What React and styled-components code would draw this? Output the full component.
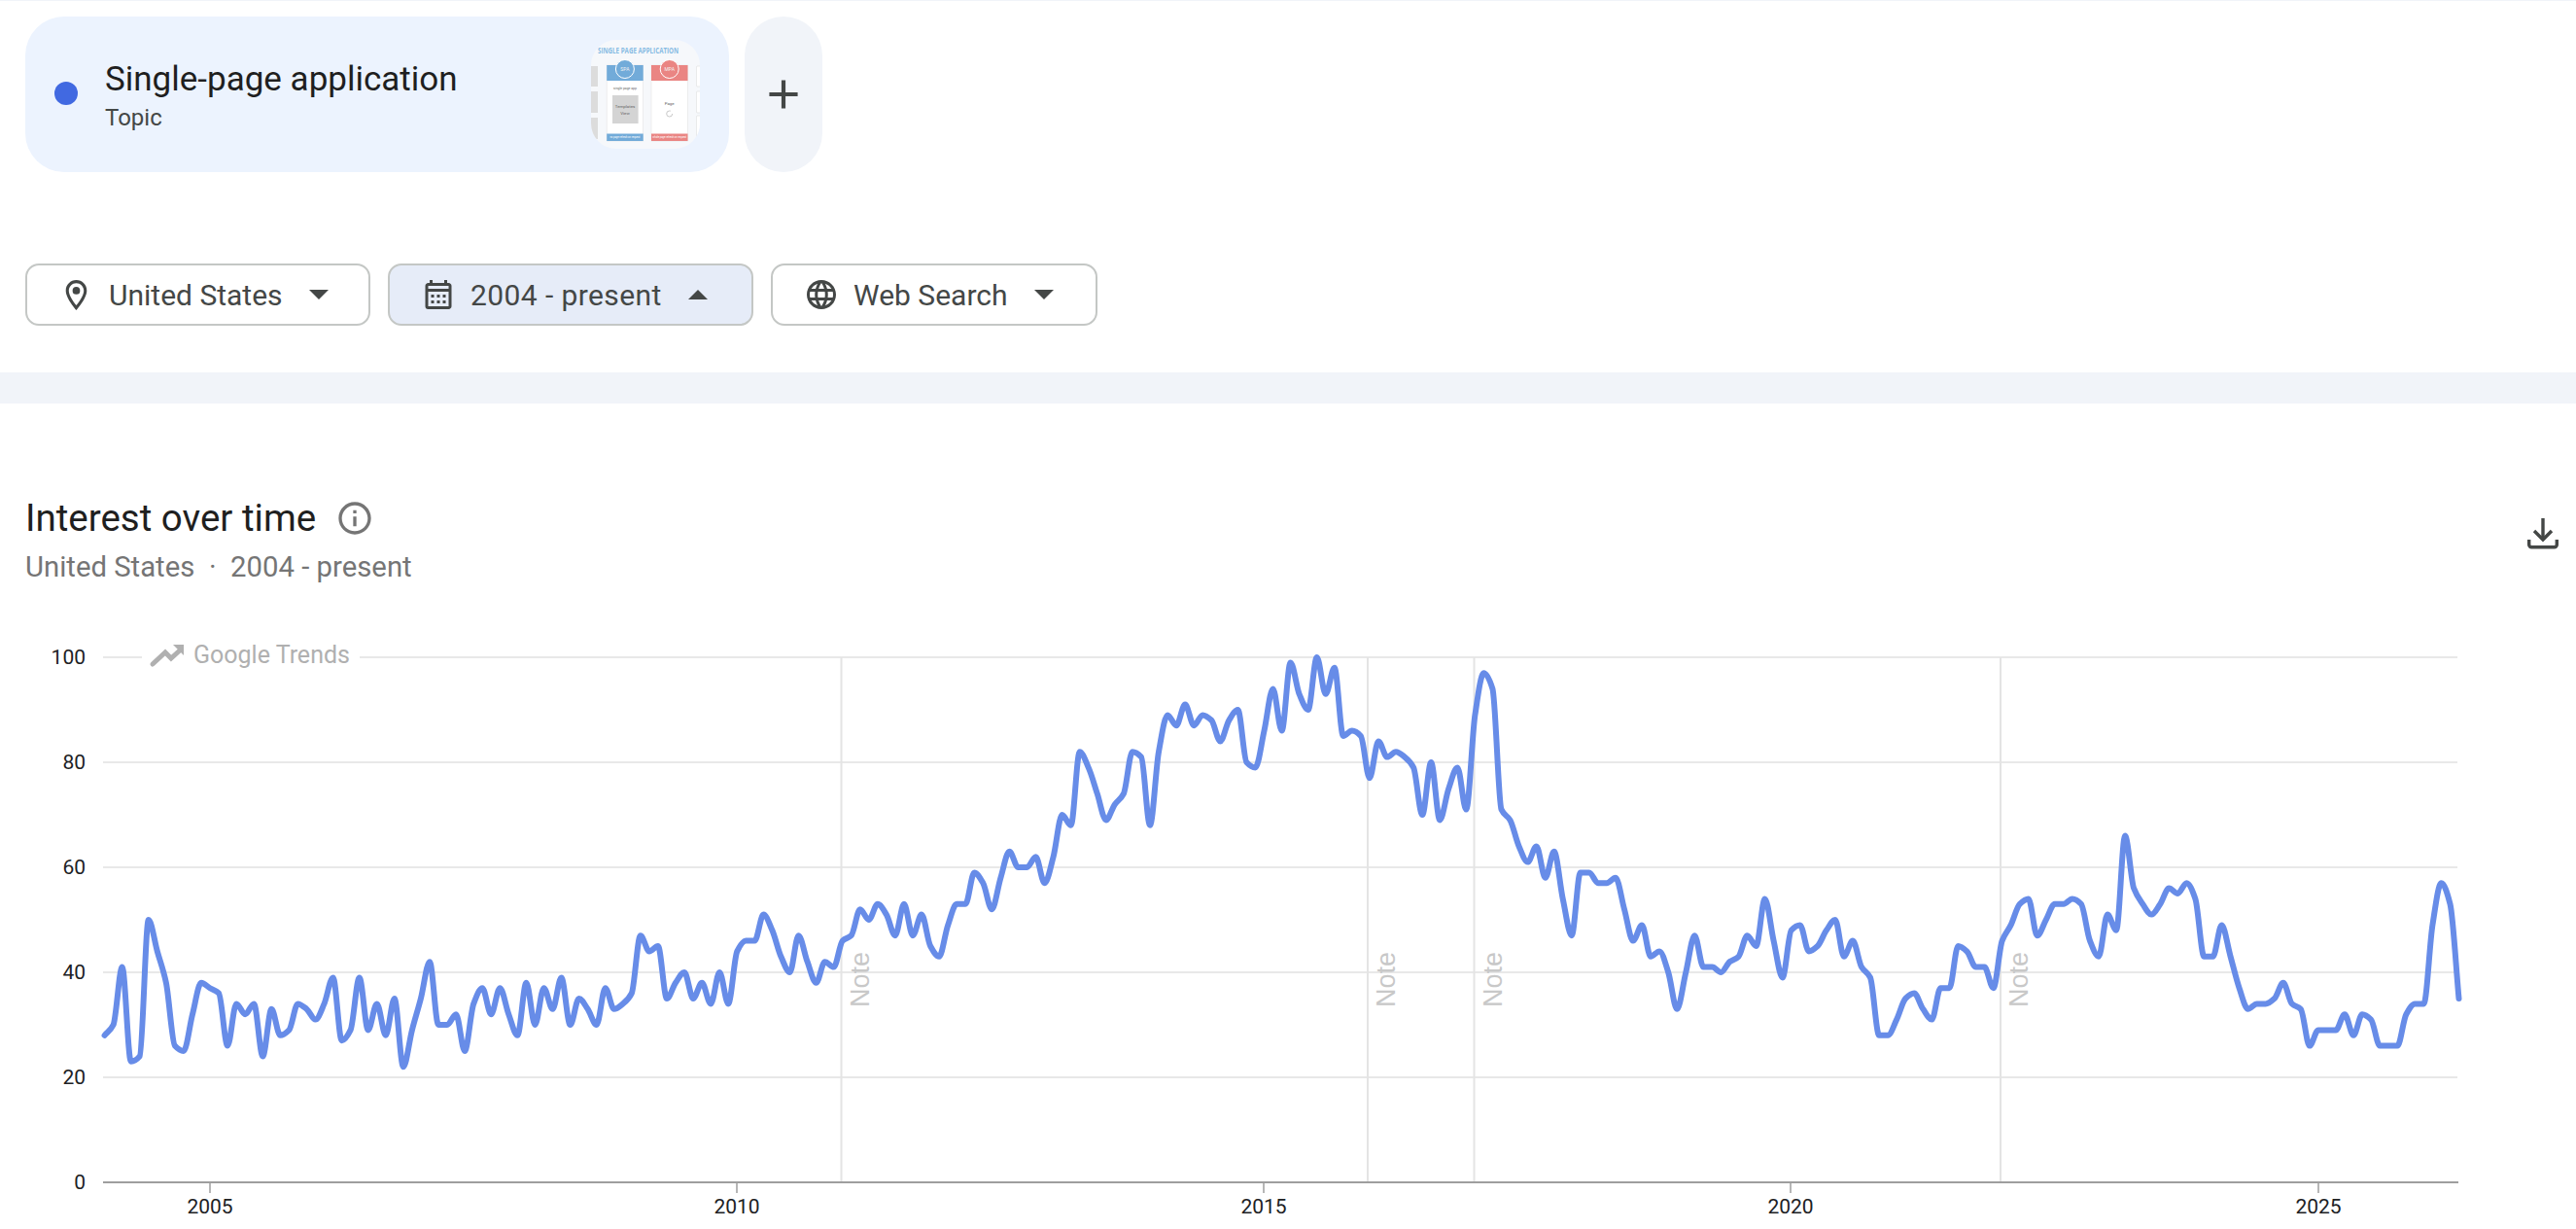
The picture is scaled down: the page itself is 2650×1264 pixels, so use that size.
import styled, { createGlobalStyle } from "styled-components";
import {
  MdAdd,
  MdInfoOutline,
  MdLanguage,
  MdOutlineCalendarMonth,
  MdOutlineLocationOn,
} from "react-icons/md";

const GlobalStyle = createGlobalStyle`
  html, body {
    margin: 0;
    padding: 0;
    background: #fff;
    font-family: Roboto, "Noto Sans", Arial, sans-serif;
    color: #202124;
  }
`;

const Page = styled.div`
  width: 2650px;
  border-top: 1px solid #f1f4f9;
`;

const TermRow = styled.div`
  display: flex;
  gap: 16px;
  padding: 16px 0 0 26px;
`;

const TermCard = styled.div`
  display: flex;
  align-items: center;
  width: 724px;
  height: 160px;
  box-sizing: border-box;
  padding: 0 30px 0 30px;
  border-radius: 40px;
  background: #ecf3fe;
`;

const ColorDot = styled.span`
  width: 24px;
  height: 24px;
  margin-top: -3px;
  border-radius: 50%;
  background: #4169e1;
  flex-shrink: 0;
`;

const TermText = styled.div`
  flex: 1;
  margin-left: 28px;
`;

const TermName = styled.div`
  font-size: 35px;
  line-height: 47px;
  color: #1f1f1f;
`;

const TermKind = styled.div`
  font-size: 24px;
  line-height: 32px;
  color: #444746;
`;

const Thumb = styled.svg`
  width: 112px;
  height: 112px;
  border-radius: 26px;
  display: block;
  flex-shrink: 0;
`;

const AddButton = styled.button`
  width: 80px;
  height: 160px;
  padding: 0;
  border: 0;
  border-radius: 40px;
  background: #f1f4f9;
  color: #444746;
  display: flex;
  align-items: center;
  justify-content: center;
`;

const FilterRow = styled.div`
  display: flex;
  gap: 18px;
  padding: 94px 0 48px 26px;
`;

const FilterChip = styled.button`
  display: flex;
  align-items: center;
  width: ${(props) => props.$width}px;
  height: 64px;
  box-sizing: border-box;
  padding: 0 0 0 32px;
  border: 2px solid #c4c7c5;
  border-radius: 14px;
  background: ${(props) => (props.$active ? "#e6ecf8" : "#fff")};
  color: #444746;
  font-family: inherit;
  font-size: 30px;
`;

const ChipLabel = styled.span`
  margin-left: 15px;
  margin-right: 27px;
  white-space: nowrap;
  letter-spacing: ${(props) => props.$tracking || 0}px;
`;

const Caret = styled.span`
  width: 0;
  height: 0;
  border-left: 10px solid transparent;
  border-right: 10px solid transparent;
  border-top: ${(props) => (props.$up ? "0" : "10px solid #444746")};
  border-bottom: ${(props) => (props.$up ? "10px solid #444746" : "0")};
`;

const Divider = styled.div`
  height: 32px;
  background: #f1f4f9;
`;

const ChartHeader = styled.header`
  display: flex;
  justify-content: space-between;
  height: 225px;
  box-sizing: border-box;
  padding: 96px 18px 0 26px;
`;

const TitleRow = styled.div`
  display: flex;
  align-items: center;
  gap: 20px;
  height: 44px;
`;

const Title = styled.h2`
  margin: 0;
  font-size: 38.5px;
  font-weight: 400;
  line-height: 44px;
  color: #1f1f1f;
`;

const InfoButton = styled.span`
  display: flex;
  color: #757575;
`;

const Subtitle = styled.div`
  margin-top: 10px;
  font-size: 29.3px;
  line-height: 36px;
  color: #757575;
  white-space: pre;
`;

const DownloadIcon = styled.svg`
  width: 32px;
  height: 32px;
  margin-top: 22px;
  color: #444746;
`;

const ChartSvg = styled.svg`
  display: block;
  width: 2650px;
  height: 624px;
`;

const AxisText = styled.text`
  font-family: Roboto, sans-serif;
  font-size: 21px;
  fill: #202124;
`;

const WatermarkText = styled.text`
  font-family: Roboto, sans-serif;
  font-size: 25px;
  fill: #b0b0b0;
`;

const NoteText = styled.text`
  font-family: "Liberation Sans", Arial, sans-serif;
  font-size: 27px;
  fill: #c8c8c8;
`;

const INTEREST = [
  28, 30, 41, 23, 24, 50, 44, 38, 26, 25, 32, 38, 37, 36, 26, 34, 32, 34, 24, 33, 28, 29, 34, 33,
  31, 34, 39, 27, 29, 39, 29, 34, 28, 35, 22, 29, 35, 42, 30, 30, 32, 25, 34, 37, 32, 37, 32, 28,
  38, 30, 37, 33, 39, 30, 35, 33, 30, 37, 33, 34, 36, 47, 44, 45, 35, 38, 40, 35, 38, 34, 40, 34,
  44, 46, 46, 51, 48, 43, 40, 47, 42, 38, 42, 41, 46, 47, 52, 50, 53, 51, 47, 53, 47, 51, 45, 43,
  49, 53, 53, 59, 57, 52, 58, 63, 60, 60, 62, 57, 62, 70, 68, 82, 79, 74, 69, 72, 74, 82, 81, 68,
  82, 89, 87, 91, 87, 89, 88, 84, 88, 90, 80, 79, 86, 94, 86, 99, 93, 90, 100, 93, 98, 85, 86, 85,
  77, 84, 81, 82, 81, 79, 70, 80, 69, 75, 79, 71, 89, 97, 94, 71, 69, 64, 61, 64, 58, 63, 54, 47,
  59, 59, 57, 57, 58, 52, 46, 49, 43, 44, 40, 33, 40, 47, 41, 41, 40, 42, 43, 47, 45, 54, 46, 39,
  48, 49, 44, 45, 48, 50, 43, 46, 41, 39, 28, 28, 31, 35, 36, 33, 31, 37, 37, 45, 44, 41, 41, 37,
  46, 49, 53, 54, 47, 50, 53, 53, 54, 53, 46, 43, 51, 48, 66, 56, 53, 51, 53, 56, 55, 57, 54, 43,
  43, 49, 43, 37, 33, 34, 34, 35, 38, 34, 33, 26, 29, 29, 29, 32, 28, 32, 31, 26, 26, 26, 32, 34,
  34, 49, 57, 53, 35,
];

const X_START = 107.6;
const MONTH_W = 9.037;
const Y_ZERO = 1216;
const UNIT_H = 5.4;

const monthX = (i) => X_START + MONTH_W * i;
const valueY = (v) => Y_ZERO - v * UNIT_H;

// same idea as d3 curveMonotoneX, flat runs stay flat and peaks stay rounded
const monotonePath = (values) => {
  const pts = values.map((v, i) => [monthX(i), valueY(v)]);
  const n = pts.length;
  const slopes = [];
  for (let i = 0; i < n - 1; i++) {
    slopes.push((pts[i + 1][1] - pts[i][1]) / (pts[i + 1][0] - pts[i][0]));
  }
  const tangents = pts.map((_, i) => {
    if (i === 0) return slopes[0];
    if (i === n - 1) return slopes[n - 2];
    const a = slopes[i - 1];
    const b = slopes[i];
    if (a * b <= 0) return 0;
    return (2 * a * b) / (a + b);
  });
  let d = `M${pts[0][0].toFixed(1)} ${pts[0][1].toFixed(1)}`;
  for (let i = 0; i < n - 1; i++) {
    const dx = (pts[i + 1][0] - pts[i][0]) / 3;
    const c1x = pts[i][0] + dx;
    const c1y = pts[i][1] + tangents[i] * dx;
    const c2x = pts[i + 1][0] - dx;
    const c2y = pts[i + 1][1] - tangents[i + 1] * dx;
    d += `C${c1x.toFixed(1)} ${c1y.toFixed(1)} ${c2x.toFixed(1)} ${c2y.toFixed(1)} ${pts[i + 1][0].toFixed(1)} ${pts[i + 1][1].toFixed(1)}`;
  }
  return d;
};

const GRID_VALUES = [20, 40, 60, 80];
const Y_LABELS = [0, 20, 40, 60, 80, 100];
const YEAR_TICKS = [
  [2005, 216],
  [2010, 758],
  [2015, 1300],
  [2020, 1842],
  [2025, 2385],
];
const NOTE_LINES = [865.5, 1407, 1516.5, 2058];

const ThumbColumn = ({ x, color, label, children, footer }) => (
  <g>
    <rect x={x} y="26" width="37.5" height="78" fill="#fff" stroke="#e3e3e3" strokeWidth="0.6" />
    <rect x={x} y="26" width="37.5" height="16" fill={color} />
    <rect x={x} y="96.5" width="37.5" height="7.5" fill={color} />
    <circle cx={x + 18.7} cy="30" r="9.5" fill={color} stroke="#fff" strokeWidth="1" />
    <text x={x + 18.7} y="32" fontSize="5" fill="#f2f2f2" textAnchor="middle" fontFamily="Roboto, sans-serif">
      {label}
    </text>
    {children}
    <text x={x + 18.7} y="101" fontSize="2.6" fill="#fff" textAnchor="middle" fontFamily="Roboto, sans-serif">
      {footer}
    </text>
  </g>
);

const ThumbText = ({ x, y, size = 4.4, children }) => (
  <text x={x} y={y} fontSize={size} fill="#666" textAnchor="middle" fontFamily="Roboto, sans-serif">
    {children}
  </text>
);

const TopicThumb = () => (
  <Thumb viewBox="0 0 112 112">
    <rect width="112" height="112" fill="#f6f8fb" />
    <text
      transform="translate(7 14) scale(0.78 1)"
      fontSize="8"
      fontWeight="700"
      fill="#86bbe3"
      fontFamily="'Open Sans', sans-serif"
    >
      SINGLE PAGE APPLICATION
    </text>
    <rect x="0" y="27" width="7" height="21" fill="#dcdcdc" />
    <rect x="0" y="53" width="7" height="22" fill="#dcdcdc" />
    <rect x="0" y="80" width="7" height="22" fill="#dcdcdc" />
    <rect x="108.5" y="27" width="8" height="21" rx="1" fill="#fff" stroke="#dedede" strokeWidth="0.6" />
    <rect x="108.5" y="53" width="8" height="22" rx="1" fill="#fff" stroke="#dedede" strokeWidth="0.6" />
    <rect x="108.5" y="78" width="8" height="23" rx="1" fill="#fff" stroke="#dedede" strokeWidth="0.6" />
    <ThumbColumn x={16.2} color="#72abd9" label="SPA" footer="no page refresh on request">
      <ThumbText x={35} y={50.5} size={3.4}>
        single page app
      </ThumbText>
      <rect x="22" y="57" width="26.6" height="29" fill="#d4d4d4" />
      <ThumbText x={35} y={70}>
        Templates
      </ThumbText>
      <ThumbText x={35} y={77}>
        View
      </ThumbText>
    </ThumbColumn>
    <ThumbColumn x={62} color="#ea8583" label="MPA" footer="whole page refresh on request">
      <ThumbText x={80.7} y={67}>
        Page
      </ThumbText>
      <circle cx="80.7" cy="76" r="3" fill="none" stroke="#bbb" strokeWidth="0.8" strokeDasharray="15 4" />
    </ThumbColumn>
  </Thumb>
);

const TrendChart = () => (
  <ChartSvg viewBox="0 640 2650 624">
    {GRID_VALUES.map((v) => (
      <line key={v} x1="106" x2="2528" y1={valueY(v)} y2={valueY(v)} stroke="#e8e8e8" strokeWidth="2" />
    ))}
    <line x1="106" x2="146" y1="676" y2="676" stroke="#e8e8e8" strokeWidth="2" />
    <line x1="370" x2="2528" y1="676" y2="676" stroke="#e8e8e8" strokeWidth="2" />

    {NOTE_LINES.map((x) => (
      <g key={x}>
        <line x1={x} x2={x} y1="676" y2="1216" stroke="#e4e4e4" strokeWidth="2" />
        <NoteText transform={`translate(${x + 28} 1036) rotate(-90)`}>Note</NoteText>
      </g>
    ))}

    <path d={monotonePath(INTEREST)} fill="none" stroke="#678ce8" strokeWidth="6" strokeLinejoin="round" strokeLinecap="round" />

    <polyline points="157,683 170,671 176,677 186,668" fill="none" stroke="#b0b0b0" strokeWidth="5" strokeLinecap="round" />
    <polygon points="178,663 189,663 189,674" fill="#b0b0b0" />
    <WatermarkText x="199" y="682">
      Google Trends
    </WatermarkText>

    <line x1="106" x2="2529" y1="1216" y2="1216" stroke="#9e9e9e" strokeWidth="2" />
    {YEAR_TICKS.map(([year, x]) => (
      <g key={year}>
        <line x1={x} x2={x} y1="1216" y2="1227" stroke="#9e9e9e" strokeWidth="1.5" />
        <AxisText x={x} y="1248" textAnchor="middle">
          {year}
        </AxisText>
      </g>
    ))}
    {Y_LABELS.map((v) => (
      <AxisText key={v} x="88" y={valueY(v) + 7} textAnchor="end">
        {v}
      </AxisText>
    ))}
  </ChartSvg>
);

const App = () => (
  <Page>
    <GlobalStyle />
    <TermRow>
      <TermCard>
        <ColorDot />
        <TermText>
          <TermName>Single-page application</TermName>
          <TermKind>Topic</TermKind>
        </TermText>
        <TopicThumb />
      </TermCard>
      <AddButton>
        <MdAdd size={50} />
      </AddButton>
    </TermRow>

    <FilterRow>
      <FilterChip $width={355}>
        <MdOutlineLocationOn size={37} />
        <ChipLabel>United States</ChipLabel>
        <Caret />
      </FilterChip>
      <FilterChip $width={376} $active>
        <MdOutlineCalendarMonth size={36} />
        <ChipLabel $tracking={0.4}>2004 - present</ChipLabel>
        <Caret $up />
      </FilterChip>
      <FilterChip $width={336}>
        <MdLanguage size={36} />
        <ChipLabel>Web Search</ChipLabel>
        <Caret />
      </FilterChip>
    </FilterRow>

    <Divider />

    <ChartHeader>
      <div>
        <TitleRow>
          <Title>Interest over time</Title>
          <InfoButton>
            <MdInfoOutline size={40} />
          </InfoButton>
        </TitleRow>
        <Subtitle>United States  ·  2004 - present</Subtitle>
      </div>
      <DownloadIcon viewBox="0 0 32 32" fill="none" stroke="currentColor" strokeWidth="3.4">
        <path d="M16 0V21" />
        <path d="M7 13l9 9 9-9" />
        <path d="M1.7 22v5.3a2.5 2.5 0 0 0 2.5 2.5h23.6a2.5 2.5 0 0 0 2.5-2.5V22" />
      </DownloadIcon>
    </ChartHeader>

    <TrendChart />
  </Page>
);

export default App;
